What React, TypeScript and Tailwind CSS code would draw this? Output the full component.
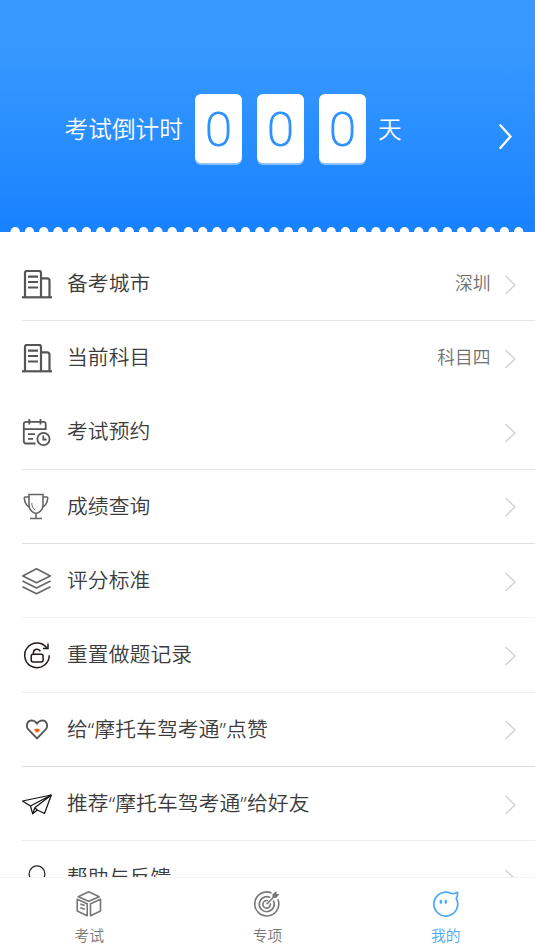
import React from 'react';

interface Row {
  label: string;
  icon: React.ReactNode;
  value?: string;
  line?: string;
}

const BuildingIcon = () => (
  <svg width="30" height="30" viewBox="0 0 30 30" fill="none" stroke="#555" strokeWidth="2.200">
    <path d="M0 27.300H30" />
    <path d="M3 27.500V3A2.300 2.300 0 0 1 5.300.8h11.400A2.300 2.300 0 0 1 19 3v24.500M19 8.300h6a2.500 2.500 0 0 1 2.500 2.500V27.500" />
    <path d="M6 6.700h10M6 12h10M6 17.500h10" />
  </svg>
);

const CalendarIcon = () => (
  <svg width="30" height="30" viewBox="0 0 30 30" fill="none" stroke="#555" strokeWidth="1.800">
    <path d="M13.500 25.500H4a2.200 2.200 0 0 1-2.200-2.200V6A2.200 2.200 0 0 1 4 3.800h17.500A2.200 2.200 0 0 1 23.700 6v6M1.800 11.200h21.900" />
    <path d="M7.300 1v5.500M18.500 1v5.500M6 16.200h7M6 20.800h5" />
    <circle cx="21.500" cy="21" r="6.100" />
    <path d="M21.300 17.500v4h3.300" />
  </svg>
);

const TrophyIcon = () => (
  <svg width="30" height="30" viewBox="0 0 30 30" fill="none" stroke="#666" strokeWidth="1.600">
    <path d="M7 2.500h14V13c0 4-3 7.300-7 8.500-4-1.200-7-4.500-7-8.500z" />
    <path d="M7 5H3.200c-.8 0-1 .5-.9 1.200C2.700 10.500 4 13.500 7.300 15M21 5h3.800c.8 0 1 .5.9 1.200C25.300 10.500 24 13.500 20.700 15" />
    <path d="M14 21.500v5M8 26.500h12" />
    <path d="M9.800 11c0 3.500 1.200 5.500 3.500 7" strokeWidth="1" />
  </svg>
);

const LayersIcon = () => (
  <svg width="30" height="30" viewBox="0 0 30 30" fill="none" stroke="#666" strokeWidth="1.600" strokeLinejoin="round">
    <path d="M14.500 1.800L28.300 9 14.500 15.800.8 9z" />
    <path d="M.5 14l14 7 14-7M.5 19.800l14 7 14-7" />
  </svg>
);

const ResetIcon = () => (
  <svg width="30" height="30" viewBox="0 0 30 30" fill="none" stroke="#231815" strokeWidth="1.500">
    <path d="M24.900 7A12.300 12.300 0 1 0 27.300 14.300" />
    <path d="M26 2.500v4.900h-5" />
    <rect x="9.200" y="13.200" width="11.900" height="7.900" rx="2" />
    <path d="M11.400 13.200v-1.500a3.600 3.600 0 0 1 6.900-1.300" />
  </svg>
);

const HeartIcon = () => (
  <svg width="30" height="30" viewBox="0 0 30 30" fill="none">
    <path d="M15 23.400L6.300 14.500C3.500 11 5 5.500 9.500 5.400c2.500 0 4.200 1.300 5.500 3.200 1.300-1.900 3-3.200 5.500-3.200 4.500.1 6 5.600 3.200 9.100z" stroke="#555" strokeWidth="1.800" />
    <path d="M15 17.400l-2.100-1.700c-.8-1.200.1-1.900 1.100-1.800l1 .3 1-.3c1-.1 1.900.6 1.100 1.800z" fill="#ff5000" stroke="#ff5000" strokeWidth=".5" />
  </svg>
);

const PlaneIcon = () => (
  <svg width="30" height="30" viewBox="0 0 30 30" fill="none" stroke="#111" strokeWidth="1.200" strokeLinejoin="round">
    <path d="M.5 11L29.300 5 22.500 23.500 15.300 20 10.700 23.800 8.500 16z" />
    <path d="M29.300 5L8.500 16M29.300 5L12.800 17.800l-2.100 6M12.800 17.800l2.500 2.200" />
  </svg>
);

const HelpIcon = () => (
  <svg width="30" height="30" viewBox="0 0 30 30" fill="none" stroke="#222" strokeWidth="1.200">
    <circle cx="15" cy="9.800" r="7.900" />
    <path d="M3 29c1-7 6-11 12-11s11 4 12 11" />
  </svg>
);

const rows: Row[] = [
  { label: '备考城市', icon: <BuildingIcon />, value: '深圳', line: 'border-[#e6e6e6]' },
  { label: '当前科目', icon: <BuildingIcon />, value: '科目四', line: 'border-transparent' },
  { label: '考试预约', icon: <CalendarIcon />, line: 'border-[#e6e6e6]' },
  { label: '成绩查询', icon: <TrophyIcon />, line: 'border-[#dfdfdf]' },
  { label: '评分标准', icon: <LayersIcon />, line: 'border-[#f4f4f4]' },
  { label: '重置做题记录', icon: <ResetIcon />, line: 'border-[#eeeeee]' },
  { label: '给“摩托车驾考通”点赞', icon: <HeartIcon />, line: 'border-[#d9d9d9]' },
  { label: '推荐“摩托车驾考通”给好友', icon: <PlaneIcon />, line: 'border-[#eeeeee]' },
  { label: '帮助与反馈', icon: <HelpIcon />, line: 'border-transparent' },
];

// the scalloped edge is a strip of 12 dots, repeated with a slightly wider gap
const dots = Array.from({ length: 36 }, (_, i) => 15.2 + i * 14.27 + Math.floor(i / 12) * 2);

const Countdown = () => (
  <header className="flex h-[232px] flex-col bg-linear-to-b from-[#3799ff] from-20% to-[#1781ff] text-white">
    <div className="flex flex-1 items-start pt-[94px] pl-[64.5px]">
      <span className="mt-[18px] w-[130.5px] text-[23.7px] leading-[34px]">考试倒计时</span>
      <div className="flex gap-[15px]">
        {[0, 0, 0].map((digit, i) => (
          <div
            key={i}
            className="flex h-[69px] w-[47px] items-center justify-center rounded-[6px] bg-white pt-[2px] font-[Roboto] text-[49px] leading-none font-extralight text-[#2b90ff] shadow-[0_2px_0_#8bc1ff] [-webkit-text-stroke:0.8px_#2b90ff]"
          >
            {digit}
          </div>
        ))}
      </div>
      <span className="mt-[18px] ml-3 text-[23.7px] leading-[34px]">天</span>
      <svg className="mt-[29px] mr-[22.5px] ml-auto" width="15" height="28" viewBox="0 0 15 28" fill="none" stroke="#fff" strokeWidth="2.300" strokeLinecap="round">
        <path d="M2.300 2.300l10.200 11.300L2.300 24.900" />
      </svg>
    </div>
    <svg className="block" width="535" height="5" viewBox="0 0 535 5" fill="#fff">
      {dots.map(x => (
        <circle key={x} cx={x} cy="4.700" r="4.700" />
      ))}
    </svg>
  </header>
);

const MenuRow = ({ label, icon, value, line }: Row) => (
  <li className={`ml-[22px] flex h-[74.33px] shrink-0 items-center border-b ${line}`}>
    <span className="mt-[2px] w-[45px]">{icon}</span>
    <span className="mb-[1.5px] text-[20.75px] leading-[30px] tracking-[0.1px] text-[#3c3c3c]">{label}</span>
    <span className="mb-px ml-auto text-[17.8px] leading-[28px] text-[#707070]">{value}</span>
    <svg className="mt-[2px] mr-[18.5px] ml-[13px]" width="13" height="20" viewBox="0 0 13 20" fill="none" stroke="#d5d5d5" strokeWidth="1.500">
      <path d="M1.500 1L11 10 1.500 19" />
    </svg>
  </li>
);

const ExamIcon = () => (
  <svg width="28" height="28" viewBox="0 0 28 28" fill="none" stroke="#777" strokeWidth="1.600" strokeLinejoin="round">
    <path d="M13.700 1.800L24.300 6.700 13.700 11.300 3.200 6.700z" />
    <path d="M2.200 9.200l10 4.600v12l-10-4.800zM15.500 13.800l10-4.600V21l-10 4.800z" />
    <path d="M5.300 14l4.500 1.500M5.300 17.700l4.500 1.500" />
  </svg>
);

const TargetIcon = () => (
  <svg width="28" height="28" viewBox="0 0 28 28" fill="none" stroke="#777" strokeWidth="1.600">
    <path d="M18.500 2.900A12 12 0 1 0 24.800 9.200" />
    <path d="M17.300 7.600A7.500 7.500 0 1 0 20.300 10.600" />
    <path d="M14.800 10.700a3.800 3.800 0 1 0 2.500 2.600" />
    <path d="M13.500 14.300l9-9" />
    <path d="M19.500 7.500V4.300L23.500 1v3l3 .2-3.400 3.700z" fill="#777" stroke="none" />
  </svg>
);

const MineIcon = () => (
  <svg width="28" height="28" viewBox="0 0 28 28" fill="none" stroke="#4ba8f8" strokeWidth="1.700" strokeLinejoin="round">
    <path d="M18.800 3.300A11.900 11.900 0 1 0 24.300 8.500c1-1.800 1.500-3.800 1.200-6.200-2 1.100-4.500 1.600-6.700 1z" />
    <path d="M8.800 10.900v1.700M13.800 10.900v1.700" strokeWidth="2.500" strokeLinecap="round" />
  </svg>
);

const tabs = [
  { label: '考试', icon: <ExamIcon />, color: 'text-[#777]' },
  { label: '专项', icon: <TargetIcon />, color: 'text-[#777]' },
  { label: '我的', icon: <MineIcon />, color: 'text-[#4ba8f8]' },
];

export default function App() {
  return (
    <div className="flex h-[951px] w-[535px] flex-col overflow-hidden bg-white font-['Noto_Sans','Noto_Sans_CJK_SC',sans-serif] font-[350]">
      <Countdown />
      <ul className="flex min-h-0 flex-1 flex-col overflow-hidden pt-[14.85px]">
        {rows.map(row => (
          <MenuRow key={row.label} {...row} />
        ))}
      </ul>
      <nav className="grid h-[74px] shrink-0 grid-cols-3 border-t border-[#f4f4f4] bg-white">
        {tabs.map(tab => (
          <div key={tab.label} className={`flex flex-col items-center pt-3 ${tab.color}`}>
            {tab.icon}
            <span className="mt-[6px] text-[14.8px] leading-[22px]">{tab.label}</span>
          </div>
        ))}
      </nav>
    </div>
  );
}
